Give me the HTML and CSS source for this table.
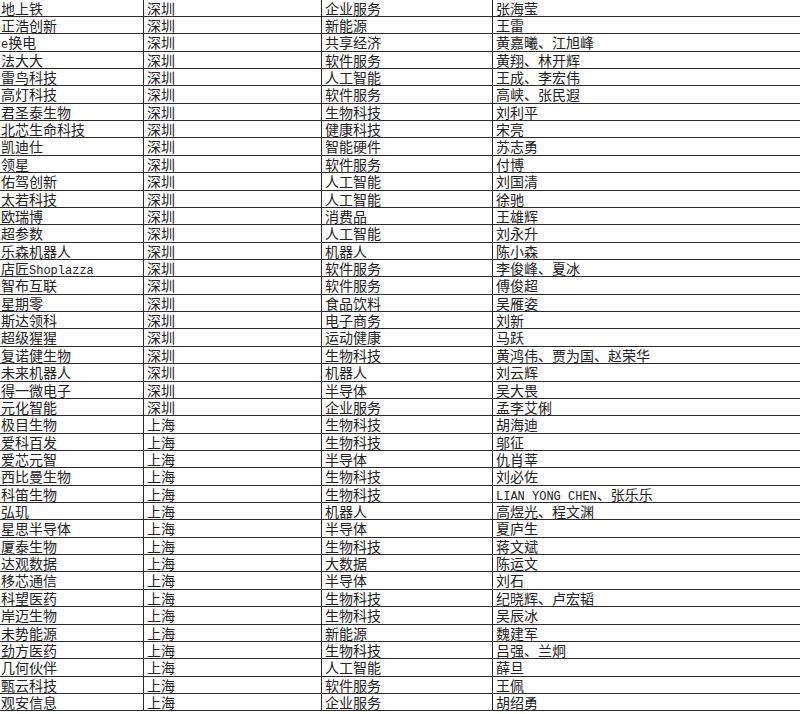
FILE: index.html
```html
<!DOCTYPE html>
<html lang="zh-CN">
<head>
<meta charset="utf-8">
<title>Sheet</title>
<link rel="stylesheet" href="styles.css">
</head>
<body>
<div class="sheet">
<div class="cell">地上铁</div><div class="cell">深圳</div><div class="cell">企业服务</div><div class="cell">张海莹</div>
<div class="cell">正浩创新</div><div class="cell">深圳</div><div class="cell">新能源</div><div class="cell">王雷</div>
<div class="cell"><span class="lat">e</span>换电</div><div class="cell">深圳</div><div class="cell">共享经济</div><div class="cell">黄嘉曦、江旭峰</div>
<div class="cell">法大大</div><div class="cell">深圳</div><div class="cell">软件服务</div><div class="cell">黄翔、林开辉</div>
<div class="cell">雷鸟科技</div><div class="cell">深圳</div><div class="cell">人工智能</div><div class="cell">王成、李宏伟</div>
<div class="cell">高灯科技</div><div class="cell">深圳</div><div class="cell">软件服务</div><div class="cell">高峡、张民遐</div>
<div class="cell">君圣泰生物</div><div class="cell">深圳</div><div class="cell">生物科技</div><div class="cell">刘利平</div>
<div class="cell">北芯生命科技</div><div class="cell">深圳</div><div class="cell">健康科技</div><div class="cell">宋亮</div>
<div class="cell">凯迪仕</div><div class="cell">深圳</div><div class="cell">智能硬件</div><div class="cell">苏志勇</div>
<div class="cell">领星</div><div class="cell">深圳</div><div class="cell">软件服务</div><div class="cell">付博</div>
<div class="cell">佑驾创新</div><div class="cell">深圳</div><div class="cell">人工智能</div><div class="cell">刘国清</div>
<div class="cell">太若科技</div><div class="cell">深圳</div><div class="cell">人工智能</div><div class="cell">徐驰</div>
<div class="cell">欧瑞博</div><div class="cell">深圳</div><div class="cell">消费品</div><div class="cell">王雄辉</div>
<div class="cell">超参数</div><div class="cell">深圳</div><div class="cell">人工智能</div><div class="cell">刘永升</div>
<div class="cell">乐森机器人</div><div class="cell">深圳</div><div class="cell">机器人</div><div class="cell">陈小森</div>
<div class="cell">店匠<span class="lat">Shoplazza</span></div><div class="cell">深圳</div><div class="cell">软件服务</div><div class="cell">李俊峰、夏冰</div>
<div class="cell">智布互联</div><div class="cell">深圳</div><div class="cell">软件服务</div><div class="cell">傅俊超</div>
<div class="cell">星期零</div><div class="cell">深圳</div><div class="cell">食品饮料</div><div class="cell">吴雁姿</div>
<div class="cell">斯达领科</div><div class="cell">深圳</div><div class="cell">电子商务</div><div class="cell">刘新</div>
<div class="cell">超级猩猩</div><div class="cell">深圳</div><div class="cell">运动健康</div><div class="cell">马跃</div>
<div class="cell">复诺健生物</div><div class="cell">深圳</div><div class="cell">生物科技</div><div class="cell">黄鸿伟、贾为国、赵荣华</div>
<div class="cell">未来机器人</div><div class="cell">深圳</div><div class="cell">机器人</div><div class="cell">刘云辉</div>
<div class="cell">得一微电子</div><div class="cell">深圳</div><div class="cell">半导体</div><div class="cell">吴大畏</div>
<div class="cell">元化智能</div><div class="cell">深圳</div><div class="cell">企业服务</div><div class="cell">孟李艾俐</div>
<div class="cell">极目生物</div><div class="cell">上海</div><div class="cell">生物科技</div><div class="cell">胡海迪</div>
<div class="cell">爱科百发</div><div class="cell">上海</div><div class="cell">生物科技</div><div class="cell">邬征</div>
<div class="cell">爱芯元智</div><div class="cell">上海</div><div class="cell">半导体</div><div class="cell">仇肖莘</div>
<div class="cell">西比曼生物</div><div class="cell">上海</div><div class="cell">生物科技</div><div class="cell">刘必佐</div>
<div class="cell">科笛生物</div><div class="cell">上海</div><div class="cell">生物科技</div><div class="cell"><span class="lat">LIAN YONG CHEN</span>、张乐乐</div>
<div class="cell">弘玑</div><div class="cell">上海</div><div class="cell">机器人</div><div class="cell">高煜光、程文渊</div>
<div class="cell">星思半导体</div><div class="cell">上海</div><div class="cell">半导体</div><div class="cell">夏庐生</div>
<div class="cell">厦泰生物</div><div class="cell">上海</div><div class="cell">生物科技</div><div class="cell">蒋文斌</div>
<div class="cell">达观数据</div><div class="cell">上海</div><div class="cell">大数据</div><div class="cell">陈运文</div>
<div class="cell">移芯通信</div><div class="cell">上海</div><div class="cell">半导体</div><div class="cell">刘石</div>
<div class="cell">科望医药</div><div class="cell">上海</div><div class="cell">生物科技</div><div class="cell">纪晓辉、卢宏韬</div>
<div class="cell">岸迈生物</div><div class="cell">上海</div><div class="cell">生物科技</div><div class="cell">吴辰冰</div>
<div class="cell">未势能源</div><div class="cell">上海</div><div class="cell">新能源</div><div class="cell">魏建军</div>
<div class="cell">劲方医药</div><div class="cell">上海</div><div class="cell">生物科技</div><div class="cell">吕强、兰炯</div>
<div class="cell">几何伙伴</div><div class="cell">上海</div><div class="cell">人工智能</div><div class="cell">薛旦</div>
<div class="cell">甄云科技</div><div class="cell">上海</div><div class="cell">软件服务</div><div class="cell">王佩</div>
<div class="cell">观安信息</div><div class="cell">上海</div><div class="cell">企业服务</div><div class="cell">胡绍勇</div>
</div>
</body>
</html>
```

FILE: styles.css
```css
html, body {
  margin: 0;
  padding: 0;
  background: #fff;
  overflow: hidden;
}
.sheet {
  display: grid;
  grid-template-columns: 144px 178px 171px 1fr;
  grid-auto-rows: 17.36px;
  width: 800px;
  margin-top: -0.4px;
  font-family: "Noto Sans CJK SC", "Noto Sans", sans-serif;
  font-size: 14px;
  color: #222;
}
.cell {
  box-sizing: border-box;
  padding: 0 0 0 3px;
  line-height: 16px;
  border-bottom: 1px solid #2a2a2a;
  border-right: 1px solid #2a2a2a;
  white-space: nowrap;
}
.cell:nth-child(4n+1) {
  padding-left: 1px;
}
.cell:nth-child(4n) {
  border-right: none;
}
.lat {
  font-family: "Liberation Mono", "DejaVu Sans Mono", monospace;
  font-size: 12px;
  line-height: 1;
}
```
